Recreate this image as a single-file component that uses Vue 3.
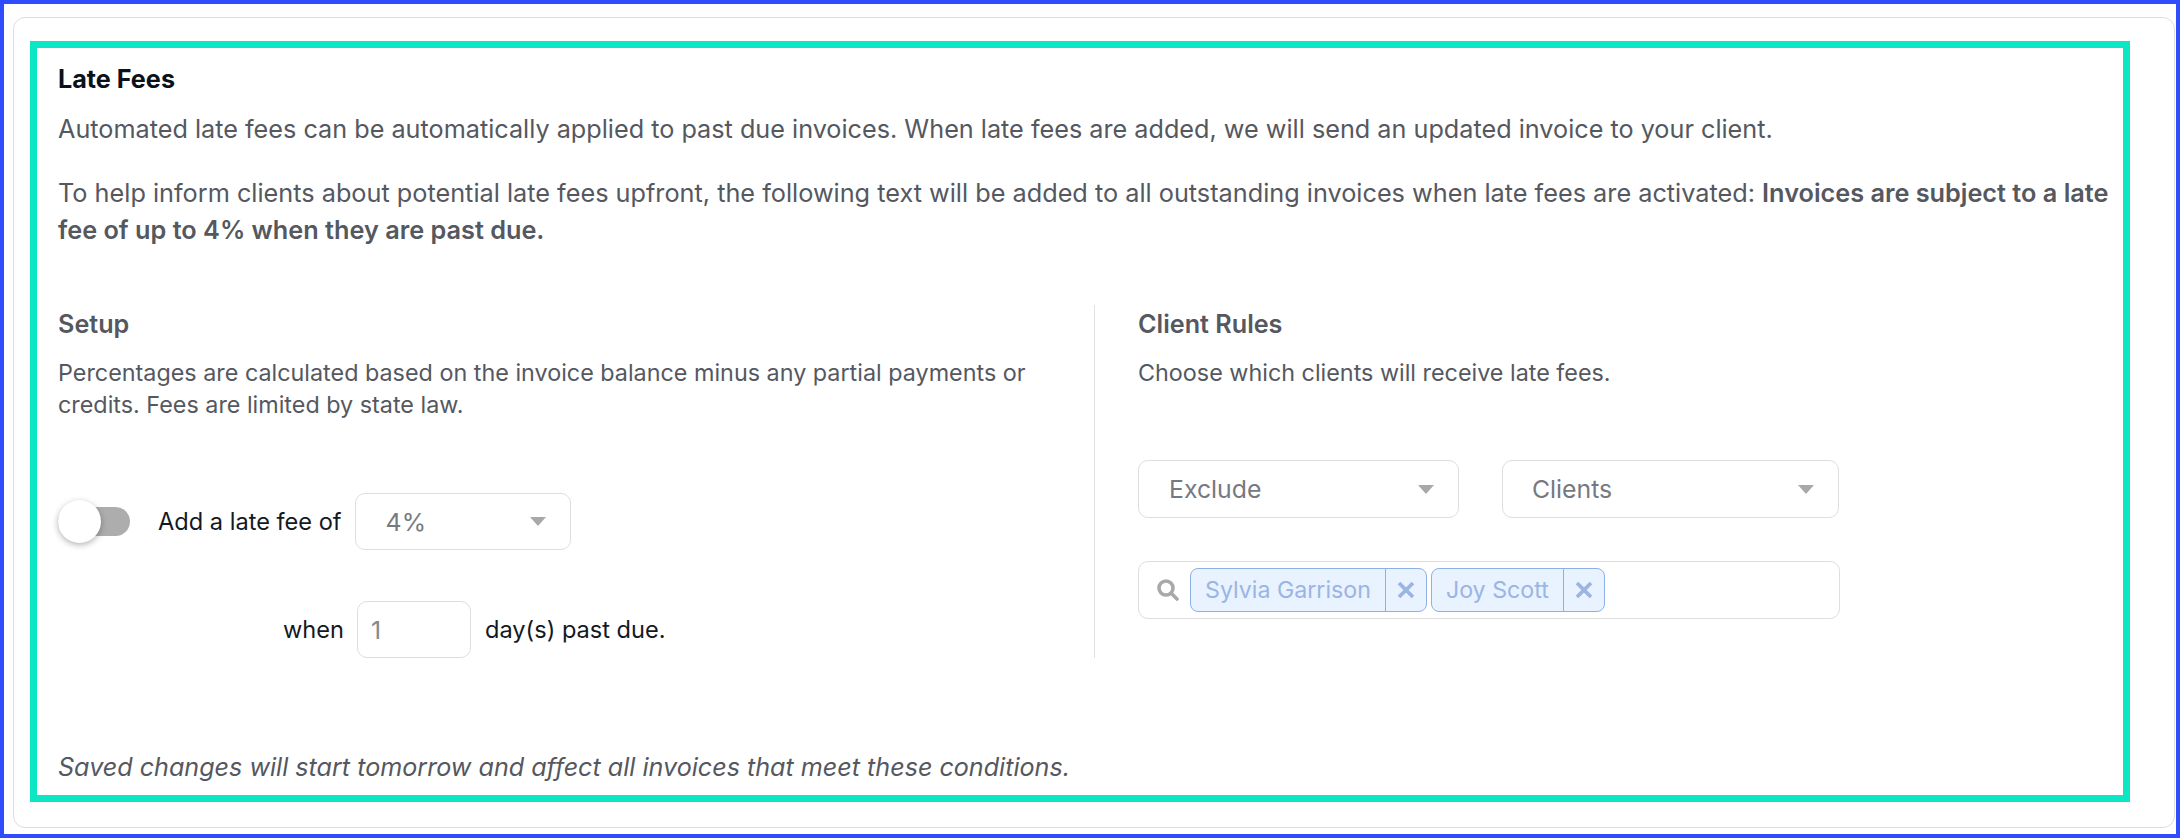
<template>
  <div class="frame">
    <div class="card">
      <section class="late-fees">
        <h2 class="title">Late Fees</h2>
        <p class="intro">Automated late fees can be automatically applied to past due invoices. When late fees are added, we will send an updated invoice to your client.</p>
        <p class="notice">To help inform clients about potential late fees upfront, the following text will be added to all outstanding invoices when late fees are activated: <strong>Invoices are subject to a late fee of up to 4% when they are past due.</strong></p>

        <div class="columns">
          <div class="setup">
            <h3 class="sub-title">Setup</h3>
            <p class="desc">Percentages are calculated based on the invoice balance minus any partial payments or credits. Fees are limited by state law.</p>
            <div class="fee-row">
              <div class="toggle"><span class="knob"></span></div>
              <span class="fee-label">Add a late fee of</span>
              <div class="select select-fee">
                <span>4%</span>
                <span class="caret"></span>
              </div>
            </div>
            <div class="days-row">
              <span class="when">when</span>
              <div class="day-input">1</div>
              <span class="days-label">day(s) past due.</span>
            </div>
          </div>

          <div class="rules">
            <h3 class="sub-title">Client Rules</h3>
            <p class="desc">Choose which clients will receive late fees.</p>
            <div class="select-row">
              <div class="select select-mode">
                <span>Exclude</span>
                <span class="caret"></span>
              </div>
              <div class="select select-type">
                <span>Clients</span>
                <span class="caret"></span>
              </div>
            </div>
            <div class="search-box">
              <svg class="search-icon" viewBox="0 0 22 22" width="22" height="22">
                <circle cx="9" cy="9" r="7" fill="none" stroke="#a9a9a9" stroke-width="3.6" />
                <path d="M14.5 14.5 L20 20" fill="none" stroke="#a9a9a9" stroke-width="3.6" stroke-linecap="round" />
              </svg>
              <div v-for="client in clients" :key="client" class="tag">
                <span class="tag-name">{{ client }}</span>
                <span class="tag-remove">
                  <svg viewBox="0 0 20 20" width="20" height="20">
                    <path d="M3 3 L17 17 M17 3 L3 17" fill="none" stroke="#9bb5e3" stroke-width="3.8" />
                  </svg>
                </span>
              </div>
            </div>
          </div>
        </div>

        <p class="footnote">Saved changes will start tomorrow and affect all invoices that meet these conditions.</p>
      </section>
    </div>
  </div>
</template>

<script setup>
const clients = ['Sylvia Garrison', 'Joy Scott'];
</script>

<style>
html, body {
  margin: 0;
  background: #fff;
}
</style>

<style scoped>
.frame {
  box-sizing: border-box;
  width: 2180px;
  height: 838px;
  border: 4px solid #2f4dff;
  padding: 13px 1px 6px 9px;
  background: #fff;
  font-family: Inter, "Liberation Sans", sans-serif;
  font-size: 25.22px;
  color: #55585f;
}

.card {
  box-sizing: border-box;
  height: 100%;
  border: 1px solid #dedede;
  border-radius: 12px;
  padding: 23px 44px 25px 16px;
}

.late-fees {
  box-sizing: border-box;
  height: 761px;
  border: 7px solid #0ce6c4;
  padding: 13px 8px 0 21px;
  display: flex;
  flex-direction: column;
}

.title {
  margin: 0;
  font-size: 25.2px;
  line-height: 36px;
  font-weight: 700;
  color: #0a1118;
}

.intro {
  margin: 14px 0 0;
  line-height: 36px;
}

.notice {
  margin: 28px 0 0;
  font-size: 25.28px;
  line-height: 37px;
}

.notice strong {
  font-weight: 600;
}

.columns {
  display: flex;
  margin-top: 56px;
  height: 353px;
}

.setup {
  width: 1037px;
  border-right: 1px solid #e2e2e2;
  box-sizing: border-box;
  padding-right: 50px;
}

.rules {
  padding-left: 43px;
}

.sub-title {
  margin: 1px 0 0;
  font-size: 25.2px;
  line-height: 36px;
  font-weight: 600;
  color: #55585f;
}

.desc {
  margin: 15px 0 0;
  font-size: 23.35px;
  line-height: 32px;
}

.fee-row {
  display: flex;
  align-items: center;
  margin-top: 72px;
}

.toggle {
  position: relative;
  width: 72px;
  height: 29px;
  border-radius: 15px;
  background: #adadad;
}

.knob {
  position: absolute;
  left: 0;
  top: -7px;
  width: 43px;
  height: 43px;
  border-radius: 50%;
  background: #fff;
  box-shadow: 0 2px 6px rgba(0, 0, 0, 0.3);
}

.fee-label {
  margin-left: 28px;
  margin-right: 13px;
  font-size: 23.6px;
  color: #14191f;
}

.select {
  box-sizing: border-box;
  display: flex;
  align-items: center;
  justify-content: space-between;
  border: 1px solid #dedede;
  border-radius: 10px;
  background: #fff;
  color: #767a80;
  font-size: 24.8px;
}

.select-fee {
  width: 216px;
  height: 57px;
  padding: 0 24px 0 30px;
}

.caret {
  width: 0;
  height: 0;
  border-left: 8px solid transparent;
  border-right: 8px solid transparent;
  border-top: 9px solid #a8a8a8;
}

.days-row {
  display: flex;
  align-items: center;
  margin-top: 51px;
  padding-left: 225px;
  font-size: 23.6px;
}

.when {
  color: #14191f;
}

.day-input {
  box-sizing: border-box;
  width: 114px;
  height: 57px;
  margin-left: 13px;
  padding-left: 13px;
  border: 1px solid #dedede;
  border-radius: 10px;
  display: flex;
  align-items: center;
  color: #85898e;
  font-size: 24.8px;
}

.days-label {
  margin-left: 14px;
  color: #14191f;
}

.select-row {
  display: flex;
  gap: 43px;
  margin-top: 71px;
}

.select-mode {
  width: 321px;
  height: 58px;
  padding: 0 24px 0 30px;
}

.select-type {
  width: 337px;
  height: 58px;
  padding: 0 24px 0 29px;
}

.search-box {
  box-sizing: border-box;
  display: flex;
  align-items: center;
  gap: 4px;
  width: 702px;
  height: 58px;
  margin-top: 43px;
  padding-left: 18px;
  border: 1px solid #dedede;
  border-radius: 10px;
}

.search-icon {
  margin-right: 7px;
}

.tag {
  display: flex;
  align-items: stretch;
  height: 44px;
  box-sizing: border-box;
  border: 1px solid #8fb0e6;
  border-radius: 8px;
  background: #e9f2ff;
  color: #9ab5e3;
}

.tag-name {
  display: flex;
  align-items: center;
  padding: 0 14px;
  font-size: 23.2px;
}

.tag-remove {
  display: flex;
  align-items: center;
  justify-content: center;
  width: 40px;
  border-left: 1px solid #8fb0e6;
}

.footnote {
  margin: auto 0 0;
  padding-bottom: 10px;
  font-style: italic;
  font-size: 25.13px;
  line-height: 36px;
}
</style>
